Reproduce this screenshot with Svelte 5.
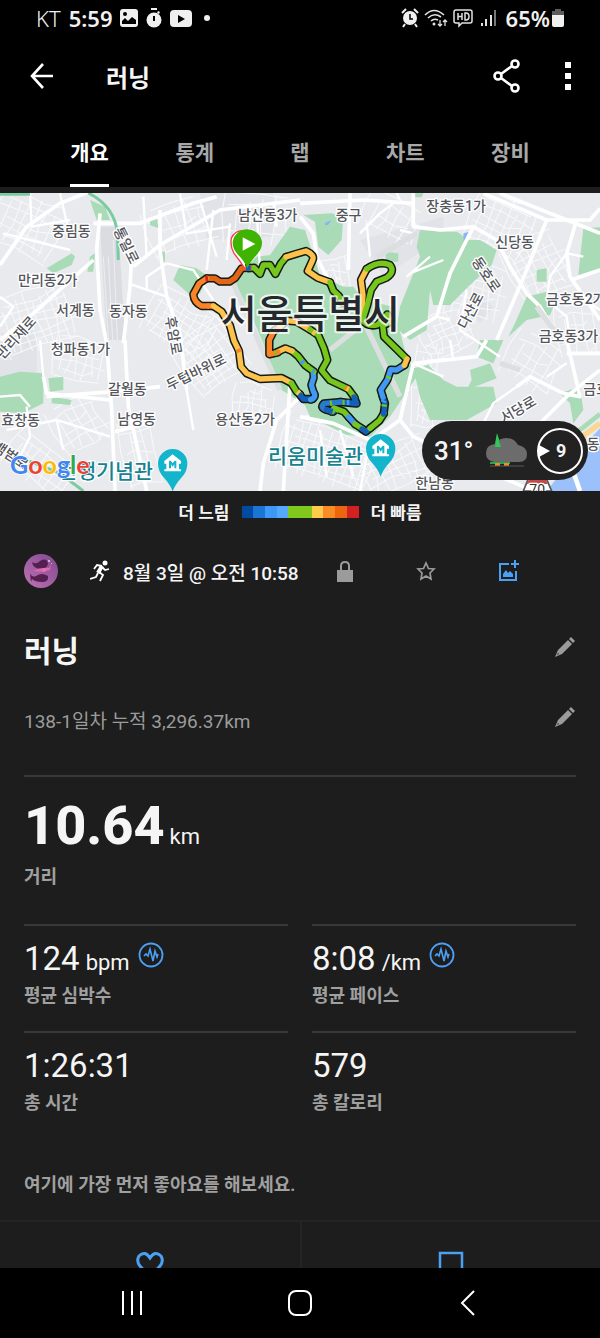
<script lang="ts">
  interface Segment {
    color: string;
    d: string;
  }

  const tabs = ["개요", "통계", "랩", "차트", "장비"];
  let activeTab = $state(0);

  const paceColors = ["#004a9f", "#1976d2", "#3f97f6", "#56a8ff", "#7fca1d", "#7fca1d", "#ffcb4c", "#fa8c28", "#ec650f", "#d32020"];

  const stats = [
    { value: "124", unit: "bpm", label: "평균 심박수", chart: true },
    { value: "8:08", unit: "/km", label: "평균 페이스", chart: true },
    { value: "1:26:31", unit: "", label: "총 시간", chart: false },
    { value: "579", unit: "", label: "총 칼로리", chart: false }
  ];

  const green = "#76c71c";
  const yellow = "#fdc24b";
  const orange = "#f98326";
  const blue = "#4299f3";
  const navy = "#145fb8";

  const route: Segment[] = [
    { color: yellow, d: "M545 270L549 210L543 165L560 132" },
    { color: green, d: "M560 132Q598 105 630 120Q646 140 620 158L590 170L573 195L562 240L548 285Q560 306 592 300L622 268L634 290L608 302L612 335L650 372L680 402" },
    { color: green, d: "M205 130L222 128L240 147L250 120L270 120L286 147L302 116L318 96" },
    { color: yellow, d: "M318 96L350 86L378 78Q405 90 398 105L383 138L412 158L450 172" },
    { color: green, d: "M450 172L460 197L476 212L490 235" },
    { color: "#e36617", d: "M208 128L185 130L166 158L148 170L120 170L104 160L80 160" },
    { color: orange, d: "M80 160L58 175L40 208Q42 232 65 243L100 243" },
    { color: yellow, d: "M100 243L125 260L150 302L162 347L177 378L183 425L200 445L240 462L305 459L334 474" },
    { color: green, d: "M334 474L350 500L360 508" },
    { color: navy, d: "M360 510L370 522L398 522" },
    { color: blue, d: "M392 524Q412 516 400 500L394 480L401 458L400 440" },
    { color: green, d: "M402 440L376 421L354 393L336 378" },
    { color: yellow, d: "M336 378L316 370L290 382" },
    { color: orange, d: "M294 382L268 388L268 345L282 317L300 305" },
    { color: yellow, d: "M300 305L320 287L350 290L390 314" },
    { color: green, d: "M390 314L415 331L432 370L442 405L425 436L450 466L505 492L524 518" },
    { color: navy, d: "M522 516L530 536L480 531" },
    { color: "#2a7bd0", d: "M484 531L432 535Q418 548 440 555L460 560" },
    { color: green, d: "M455 560L462 549L492 560L508 578" },
    { color: blue, d: "M506 576L526 598" },
    { color: green, d: "M525 597L548 612" },
    { color: navy, d: "M546 612L558 620L572 608" },
    { color: green, d: "M570 610L598 587L612 565" },
    { color: navy, d: "M611 567L615 535L608 515" },
    { color: blue, d: "M609 517L602 495L622 465L632 434L650 435L674 420" },
    { color: yellow, d: "M673 421L681 402" }
  ];

  // short colour changes along the track
  const ticks: Segment[] = [
    { color: "#d32020", d: "M76 161L84 160" },
    { color: orange, d: "M174 372L178 382M82 243L87 243M496 488L502 491" },
    { color: navy, d: "M198 129L212 129M432 552L458 560M524 524L529 534" },
    { color: green, d: "M284 385L290 383M380 424L386 427M612 545L613 538M450 535L456 534M488 532L494 532M470 554L476 556M624 460L627 454" },
    { color: blue, d: "M364 408L370 415M396 438L402 442M500 532L508 532M610 532L612 526" },
    { color: yellow, d: "M352 500L358 505M398 320L406 326M632 278L634 284M500 490L506 493" }
  ];

  const parks = [
    "M910 75L995 70L1030 80L1025 150L985 195L955 170L945 95Z",
    "M870 110L915 120L960 255L1030 290L1060 290L1090 330L1180 350L1220 500L1250 560L1170 680L1110 740L1040 735L930 680L915 645L830 590L790 460L740 345L700 270L770 200L810 195Z",
    "M540 225L590 235L625 260L600 310L570 315L520 270Z",
    "M270 30L315 50L330 90L290 90Z",
    "M450 85L470 75L475 115L450 105Z",
    "M480 185L495 185L495 215L485 220Z",
    "M140 235L215 190L225 200L215 225L160 250Z",
    "M270 200L285 190L280 245L262 245Z",
    "M1260 120L1330 125L1370 125L1400 145L1390 200L1330 290L1290 300L1280 420L1230 450L1190 415L1200 350L1260 200L1250 170Z",
    "M1390 150L1440 150L1490 180L1475 225L1410 285L1350 345L1300 345L1290 300L1350 270Z",
    "M1580 320L1640 305L1660 350L1650 375L1580 390L1525 440L1545 400Z",
    "M1610 240L1640 235L1640 275L1610 275Z",
    "M1750 115L1800 112L1800 235L1735 255Z",
    "M0 560L60 545L130 550L130 640L70 670L0 665Z",
    "M145 565L190 560L190 600L150 605Z",
    "M155 620L215 630L210 645L155 640Z",
    "M1240 535L1285 525L1330 570L1370 590L1480 590L1490 640L1400 690L1290 690L1260 620Z",
    "M1410 540L1470 520L1490 565L1400 600L1415 570Z",
    "M1680 610L1740 590L1750 660L1720 700L1710 640Z",
    "M1155 185L1195 190L1195 215L1160 215Z",
    "M1240 10L1270 10L1265 22L1240 22Z",
    "M1440 450L1510 450L1480 520L1430 500Z"
  ];

  const majorRoads = [
    "M0 225L80 110L180 40L280 0",
    "M300 70L290 180L300 360L320 460L335 660L345 903",
    "M375 450L385 650L440 903",
    "M395 200L390 290L370 460",
    "M400 230L480 165L660 60L900 30",
    "M280 100L420 100L580 40L650 20",
    "M480 60L480 180L500 320L540 430L560 600",
    "M130 560L140 610L330 630",
    "M140 620L340 605L480 590",
    "M345 725L440 700",
    "M0 450L100 370L280 210",
    "M900 80L940 130L950 200L980 260L1010 330",
    "M1050 10L1045 240",
    "M900 40L1090 30L1240 40",
    "M1240 10L1240 110L1320 120L1420 110L1490 150L1530 230L1580 310L1620 350L1680 450",
    "M1420 110L1350 250L1310 380L1210 440",
    "M1450 10L1640 90L1680 90L1770 90L1800 55",
    "M1500 10L1800 130",
    "M1640 90L1580 240L1490 450",
    "M1730 90L1700 190L1710 260L1800 390",
    "M1715 270L1800 240",
    "M1240 520L1430 500L1460 450",
    "M1240 520L1200 690L1130 740",
    "M1200 690L1240 740L1500 860L1600 903",
    "M1700 450L1740 620L1690 610L1590 560L1550 590",
    "M1700 490L1800 490",
    "M1600 720L1700 620L1800 540",
    "M900 620L830 690L790 820L780 903",
    "M870 580L850 903",
    "M900 680L1000 700L1110 750L1180 780"
  ];

  const minorRoads = [
    "M10 130L210 180M90 10L95 110L210 90M180 10L210 140M0 320L40 350L0 410",
    "M430 20L440 200M540 10L560 130L690 110M600 30L650 200M640 60L620 240M500 220L580 240L640 330",
    "M770 60L780 240M820 40L830 110M700 130L760 120M690 100L680 210",
    "M500 220L440 260L440 300L500 320M385 280L500 320M80 650L90 740L60 800",
    "M120 450L130 560M0 620L60 615L90 650M20 720L170 690L330 740M170 690L190 780",
    "M560 600L580 720M1100 100L1110 200M1180 40L1140 70L1080 130M1200 120L1240 130M1190 10L1200 30",
    "M1290 200L1220 260M1330 210L1230 250M1310 380L1350 390M1400 300L1380 420L1500 500",
    "M1750 200L1700 190M1700 190L1650 260L1640 330L1700 380L1710 450M1800 360L1720 310",
    "M1550 590L1480 640L1450 700M1700 520L1640 560M1240 520L1330 560M1350 450L1360 510",
    "M960 720L980 860M1020 720L1060 860M1110 750L1080 903M1330 700L1340 760"
  ];

  interface District {
    x: number;
    y: number;
    w: number;
    h: number;
    angle: number;
    step: number;
  }

  const districts: District[] = [
    { x: 90, y: 110, w: 220, h: 170, angle: 24, step: 28 },
    { x: 110, y: 390, w: 230, h: 180, angle: -18, step: 24 },
    { x: 240, y: 510, w: 160, h: 120, angle: 12, step: 24 },
    { x: 240, y: 700, w: 160, h: 150, angle: -30, step: 28 },
    { x: 120, y: 830, w: 220, h: 120, angle: 38, step: 26 },
    { x: 420, y: 790, w: 100, h: 200, angle: -12, step: 32 },
    { x: 540, y: 400, w: 210, h: 150, angle: 30, step: 23 },
    { x: 630, y: 500, w: 180, h: 180, angle: -35, step: 22 },
    { x: 760, y: 640, w: 120, h: 110, angle: 8, step: 20 },
    { x: 540, y: 110, w: 200, h: 150, angle: -20, step: 34 },
    { x: 780, y: 90, w: 220, h: 150, angle: 5, step: 38 },
    { x: 1010, y: 270, w: 90, h: 130, angle: -10, step: 20 },
    { x: 1180, y: 90, w: 190, h: 120, angle: 28, step: 34 },
    { x: 1500, y: 110, w: 190, h: 180, angle: 24, step: 26 },
    { x: 1620, y: 230, w: 180, h: 190, angle: -28, step: 26 },
    { x: 1430, y: 310, w: 180, h: 180, angle: 12, step: 26 },
    { x: 1340, y: 430, w: 150, h: 120, angle: -24, step: 24 },
    { x: 1280, y: 590, w: 80, h: 250, angle: 6, step: 22 },
    { x: 980, y: 790, w: 280, h: 180, angle: 18, step: 23 },
    { x: 1180, y: 830, w: 230, h: 130, angle: -24, step: 25 },
    { x: 1600, y: 520, w: 170, h: 150, angle: 30, step: 32 },
    { x: 1740, y: 420, w: 140, h: 150, angle: -8, step: 28 }
  ];

  // crooked little street grid for one district
  function streets(area: District): string {
    let d = "";
    let n = 0;
    for (let x = -area.w / 2; x <= area.w / 2; x += area.step) {
      const bend = ((n * 7) % 5) * 3 - 6;
      const cut = ((n * 11) % 4) * 12;
      d += `M${x} ${-area.h / 2 + cut}L${x + bend} ${bend * 2}L${x - bend} ${area.h / 2 - cut / 2}`;
      n++;
    }
    for (let y = -area.h / 2; y <= area.h / 2; y += area.step) {
      const bend = ((n * 5) % 7) * 3 - 9;
      const cut = ((n * 13) % 5) * 11;
      d += `M${-area.w / 2 + cut} ${y}L${bend * 2} ${y + bend}L${area.w / 2 - cut} ${y - bend}`;
      n++;
    }
    return d;
  }

  const places = [
    { name: "중림동", x: 156, y: 138 },
    { name: "만리동2가", x: 54, y: 286 },
    { name: "서계동", x: 168, y: 374 },
    { name: "동자동", x: 327, y: 377 },
    { name: "청파동1가", x: 152, y: 493 },
    { name: "갈월동", x: 324, y: 613 },
    { name: "남영동", x: 352, y: 703 },
    { name: "효창동", x: 4, y: 705 },
    { name: "용산동2가", x: 646, y: 702 },
    { name: "남산동3가", x: 714, y: 91 },
    { name: "중구", x: 1007, y: 91 },
    { name: "장충동1가", x: 1279, y: 62 },
    { name: "신당동", x: 1486, y: 170 },
    { name: "금호동2가", x: 1638, y: 343 },
    { name: "금호동3가", x: 1616, y: 453 },
    { name: "금호동", x: 1750, y: 612 },
    { name: "한남동", x: 1246, y: 893 },
    { name: "동", x: 1760, y: 776 }
  ];

  const roadNames = [
    { name: "통일로", x: 340, y: 120, angle: 64 },
    { name: "후암로", x: 496, y: 382, angle: 80 },
    { name: "두텁바위로", x: 508, y: 602, angle: -26 },
    { name: "만리재로", x: 8, y: 510, angle: -48 },
    { name: "다산로", x: 1398, y: 420, angle: -62 },
    { name: "동호로", x: 1414, y: 214, angle: 56 },
    { name: "서당로", x: 1512, y: 700, angle: -30 },
    { name: "백범로", x: -24, y: 776, angle: 34 }
  ];
</script>

{#snippet pencil()}
  <svg width="22" height="22" viewBox="0 0 22 22" fill="#9b9b9b">
    <path d="M17 1L21 5L19 7L15 3ZM14 4L18 8L8 18L1 21L4 14ZM4 17L3 19L5 18Z" fill-rule="evenodd" />
  </svg>
{/snippet}

<div class="app">
  <header>
    <div class="status-bar">
      <span class="carrier">KT</span>
      <span class="clock">5:59</span>
      <svg width="18" height="18" viewBox="0 0 18 18">
        <rect width="18" height="18" rx="3" fill="#f0f0f0" />
        <circle cx="5" cy="5" r="2" fill="#000" />
        <path d="M2 15V12L5 9L8 12L12 8L16 11V15Z" fill="#000" />
      </svg>
      <svg width="16" height="20" viewBox="0 0 16 20">
        <path d="M5 0h6v2H5ZM12 3l2 1-1 2-2-1Z" fill="#f0f0f0" />
        <circle cx="8" cy="12" r="7.500" fill="#f0f0f0" />
        <path d="M8 8V13" stroke="#000" stroke-width="2" />
      </svg>
      <svg width="22" height="18" viewBox="0 0 22 18">
        <rect y="1" width="22" height="17" rx="4" fill="#f0f0f0" />
        <path d="M8 6L15 10L8 14Z" fill="#000" />
      </svg>
      <span class="more-dot"></span>
      <span class="spacer"></span>
      <div class="indicators">
        <svg width="18" height="20" viewBox="0 0 18 20" fill="none" stroke="#f0f0f0">
          <circle cx="9" cy="10" r="7" fill="#f0f0f0" stroke="none" />
          <path d="M1 5L5 1M17 5L13 1M4 16L2 19M14 16L16 19" stroke-width="2" />
          <path d="M9 6V11H12" stroke="#000" stroke-width="1.500" />
        </svg>
        <svg width="24" height="20" viewBox="0 0 24 20" fill="none" stroke="#e2e2e2" stroke-width="1.600">
          <path d="M1 7Q10 -2 20 7M4 10Q10 4 17 9M7 13Q10 10 14 12" />
          <circle cx="10" cy="16" r="1.500" fill="#e2e2e2" stroke="none" />
          <path d="M16 12V18M14 16L16 18L18 16M21 18V12M19 14L21 12L23 14" stroke-width="1.300" />
        </svg>
        <svg width="20" height="20" viewBox="0 0 20 20" fill="none" stroke="#e2e2e2" stroke-width="1.500">
          <path d="M3 2H17Q19 2 19 4V13Q19 15 17 15H9L6 18V15H3Q1 15 1 13V4Q1 2 3 2Z" />
          <path d="M5 5V12M9 5V12M5 8.500H9M12 5V12H13Q16 12 16 8.500Q16 5 13 5Z" />
        </svg>
      </div>
      <svg width="17" height="18" viewBox="0 0 17 18" stroke="#e2e2e2" stroke-width="2">
        <path d="M1 14V17M5 10V17M10 6V17" />
        <path d="M14 1V17" stroke="#777" />
      </svg>
      <span class="battery-level">65%</span>
      <svg class="battery" width="12" height="18" viewBox="0 0 12 18">
        <path d="M3 0h6v2h3v5H0V2h3Z" fill="#5c5c5c" />
        <path d="M0 6h12v10q0 2-2 2H2q-2 0-2-2Z" fill="#f0f0f0" />
      </svg>
    </div>

    <div class="app-bar">
      <button aria-label="뒤로">
        <svg width="24" height="26" viewBox="0 0 24 26" fill="none" stroke="#fff" stroke-width="2.600">
          <path d="M23 13H2M13 1L2 13L13 25" />
        </svg>
      </button>
      <h1>러닝</h1>
      <button class="share" aria-label="공유">
        <svg width="28" height="34" viewBox="0 0 28 34" fill="none" stroke="#fff" stroke-width="2.600">
          <circle cx="5" cy="17" r="3.500" />
          <circle cx="22" cy="5" r="3.500" />
          <circle cx="22" cy="29" r="3.500" />
          <path d="M8 15L19 7M8 19L19 27" />
        </svg>
      </button>
      <button aria-label="더보기">
        <svg width="8" height="30" viewBox="0 0 8 30" fill="#fff">
          <path d="M1 1h6v6H1ZM1 12h6v6H1ZM1 23h6v6H1Z" />
        </svg>
      </button>
    </div>

    <nav class="tabs">
      {#each tabs as tab, i}
        <button class:active={i === activeTab} onclick={() => (activeTab = i)}><span>{tab}</span></button>
      {/each}
    </nav>
  </header>

  <main>
    <div class="map">
      <svg class="map-canvas" viewBox="0 9 1800 894">
        <rect y="9" width="1800" height="894" fill="#e8eaed" />
        <path d="M300 110L355 110L375 450L320 450Z" fill="#dadce1" />
        <path d="M310 200L325 450M325 200L338 450M340 150L352 450" stroke="#eceef1" stroke-width="3" />
        <path d="M0 430L110 420L110 560L0 560ZM600 10L820 10L820 140L620 150ZM1080 150L1330 80L1330 140L1150 260ZM1390 330L1440 310L1480 350L1440 400Z" fill="#e1e3e8" />

        <g class="streets">
          {#each districts as area}
            <path d={streets(area)} transform="translate({area.x} {area.y}) rotate({area.angle})" />
          {/each}
        </g>

        {#each parks as d}
          <path {d} fill="#a9dbb7" />
        {/each}
        <path d="M1390 130L1410 125L1400 150L1392 165ZM975 98L995 90L985 104L975 106Z" fill="#8ab4f8" />
        <path d="M1800 715L1730 790L1640 903H1800Z" fill="#9cc0f9" />
        <path d="M1800 700L1740 745L1690 800" stroke="#fcd592" stroke-width="16" fill="none" />
        <path d="M1800 672L1750 712L1700 745" stroke="#a9dbb7" stroke-width="14" fill="none" />
        <path d="M1690 760L1740 903" stroke="#fff" stroke-width="14" />

        <g class="minor">
          {#each minorRoads as d}
            <path {d} />
          {/each}
        </g>
        <g class="major">
          {#each majorRoads as d}
            <path {d} />
          {/each}
        </g>
        <path d="M0 13L90 13M265 9Q345 50 352 130L355 210M30 790L180 850L250 903" stroke="#7bcba0" stroke-width="9" fill="none" />
        <path d="M700 280L840 600M1060 330L1200 620M990 480L1090 400M1130 200L1250 130M1500 520L1560 540M1610 350L1690 460" stroke="#dcdfdf" stroke-width="16" fill="none" />

        <g transform="translate(540 105)" fill="none" stroke-linejoin="round">
          {#each route as seg}
            <path d={seg.d} stroke="#151a10" stroke-width="25" stroke-linecap="round" />
          {/each}
          {#each route as seg}
            <path d={seg.d} stroke={seg.color} stroke-width="16" stroke-linecap="round" />
          {/each}
          {#each ticks as tick}
            <path d={tick.d} stroke={tick.color} stroke-width="16" />
          {/each}
        </g>

        <g class="place">
          {#each places as place}
            <text x={place.x} y={place.y}>{place.name}</text>
          {/each}
          {#each roadNames as road}
            <text transform="translate({road.x} {road.y}) rotate({road.angle})">{road.name}</text>
          {/each}
        </g>
        <text class="city" x="662" y="414">서울특별시</text>
        <text class="museum" x="174" y="866">전쟁기념관</text>
        <text class="museum" x="804" y="822">리움미술관</text>

        {#each [[518, 821], [1142, 776]] as [x, y]}
          <g transform="translate({x} {y})">
            <path d="M0 84Q-6 64 -28 40Q-44 22 -44 0A44 44 0 0 1 44 0Q44 22 28 40Q6 64 0 84Z" fill="#12b5cb" />
            <path d="M-25 -8L0 -28L25 -8V0H19V17H25V23H-25V17H-19V0H-25ZM-11 14H-5V2L0 9L5 2V14H11V-9H6L0 -1L-6 -9H-11Z" fill="#fff" fill-rule="evenodd" />
          </g>
        {/each}

        <path d="M736 238Q722 215 702 190Q690 170 694 145Q704 122 728 122" stroke="#f33b55" stroke-width="4" fill="#fff" />
        <path d="M742 235Q735 215 712 192Q698 176 698 160A44 42 0 0 1 786 160Q786 176 772 192Q750 215 742 235Z" fill="#3fb400" />
        <path d="M728 142L766 162L728 182Z" fill="#fff" />

        <path d="M1584 868H1640L1655 903H1570Z" fill="#fff" stroke="#555" stroke-width="5" />
        <path d="M1586 870H1638L1643 882H1580Z" fill="#c54848" />
        <text x="1588" y="916" class="shield">70</text>
        <text class="google" x="30" y="853"><tspan fill="#4285f4">G</tspan><tspan fill="#ea4335">o</tspan><tspan fill="#fbbc05">o</tspan><tspan fill="#4285f4">g</tspan><tspan fill="#34a853">l</tspan><tspan fill="#ea4335">e</tspan></text>
      </svg>

      <div class="weather">
        <span class="temperature">31°</span>
        <svg width="42" height="36" viewBox="0 0 42 36">
          <path d="M11 0L16 16H8Z" fill="#2fc65a" />
          <path d="M8 29Q0 28 0 20Q0 12 9 11Q13 5 20 5Q28 5 32 12Q41 14 41 21Q41 29 33 29Z" fill="#6c6c6c" />
          <path d="M11 2L15 14H9Z" fill="#2fc65a" />
          <path d="M4 29H24V31H4Z" fill="#20a851" />
          <path d="M9 30H14V33H9ZM18 30H23V33H18Z" fill="#f18b2c" />
          <path d="M4 33H38" stroke="#585858" />
        </svg>
        <div class="wind">
          <svg width="11" height="12" viewBox="0 0 11 12"><path d="M0 0L11 6L0 12Z" fill="#fff" /></svg>
          <span>9</span>
        </div>
      </div>
    </div>

    <div class="legend">
      <span>더 느림</span>
      <div class="scale">
        {#each paceColors as color}
          <i style="background: {color}"></i>
        {/each}
      </div>
      <span>더 빠름</span>
    </div>

    <div class="content">
      <section class="meta">
        <svg width="35" height="35" viewBox="0 0 35 35">
          <defs>
            <linearGradient id="avatar-bg" x1="1" y1="0" x2="0" y2="1">
              <stop offset="0" stop-color="#82488f" />
              <stop offset="1" stop-color="#bd73b4" />
            </linearGradient>
          </defs>
          <circle cx="17" cy="17" r="17" fill="url(#avatar-bg)" />
          <path d="M8 8Q12 11 16 7Q23 3 24 10Q22 16 17 15Q9 15 8 8ZM6 19Q8 24 12 22Q18 18 24 22Q25 28 18 28Q11 28 8 25L7 28Z" fill="#542052" />
          <path d="M9 17Q17 13 25 14L27 10L26 16Q18 19 9 17Z" fill="#df68ac" />
          <circle cx="20" cy="16" r="2" fill="#df76b2" />
          <path d="M24 6h2v2h-2ZM27 9h1v1h-1Z" fill="#ceb5d9" />
        </svg>
        <svg class="runner" width="20" height="22" viewBox="0 0 20 22" fill="none" stroke="#fff">
          <circle cx="15" cy="3" r="2.500" fill="#fff" stroke="none" />
          <path d="M12 6L8 13" stroke-width="4" />
          <path d="M12 6L7 5L4 9M12 7L15 10L19 9M9 12L13 15L10 21M8 13L6 17L0 19" stroke-width="1.800" />
        </svg>
        <time>8월 3일 @ 오전 10:58</time>
        <div class="meta-actions">
          <button aria-label="개인 정보">
            <svg width="18" height="22" viewBox="0 0 18 22">
              <path d="M1 10H17V22H1Z" fill="#9b9b9b" />
              <path d="M5 10V6Q5 2 9 2Q13 2 13 6V10" fill="none" stroke="#9b9b9b" stroke-width="2" />
            </svg>
          </button>
          <button aria-label="즐겨찾기">
            <svg width="20" height="20" viewBox="0 0 20 20" fill="none" stroke="#9b9b9b" stroke-width="1.700">
              <path d="M10 2L12.500 7.500L18 8L14 12L15 18L10 15L5 18L6 12L2 8L7.500 7.500Z" />
            </svg>
          </button>
          <button aria-label="사진 추가">
            <svg width="22" height="22" viewBox="0 0 22 22" fill="none" stroke="#4ca0f4" stroke-width="2">
              <path d="M11 4H2V20H18V11M17 0V8M13 4H21" />
              <path d="M5 17V14L8 10L10 13L12 11L15 14V17Z" fill="#4ca0f4" stroke="none" />
            </svg>
          </button>
        </div>
      </section>

      <section class="editable name">
        <h2>러닝</h2>
        <button aria-label="이름 편집">{@render pencil()}</button>
      </section>
      <section class="editable note">
        <p>138-1일차 누적 3,296.37km</p>
        <button aria-label="메모 편집">{@render pencil()}</button>
      </section>

      <section class="distance">
        <div class="value"><strong>10.64</strong><span>km</span></div>
        <div class="label">거리</div>
      </section>

      <section class="stats">
        {#each stats as stat}
          <div class="stat">
            <div class="value">
              <strong>{stat.value}</strong>
              {#if stat.unit}<span>{stat.unit}</span>{/if}
              {#if stat.chart}
                <button aria-label="{stat.label} 차트">
                  <svg width="26" height="26" viewBox="0 0 26 26" fill="none" stroke="#4ca0f4">
                    <circle cx="13" cy="13" r="11.500" stroke-width="1.800" />
                    <path d="M6 14L8 12L10 14L12 7L15 19L17 9L19 15L20 12" stroke-width="1.600" />
                  </svg>
                </button>
              {/if}
            </div>
            <div class="label">{stat.label}</div>
          </div>
        {/each}
      </section>

      <p class="likes">여기에 가장 먼저 좋아요를 해보세요.</p>
    </div>

    <div class="actions">
      <button aria-label="좋아요">
        <svg width="28" height="28" viewBox="0 0 28 28" fill="none" stroke="#4ca0f4" stroke-width="3">
          <path d="M14 26L4 15Q0 10 3 5Q9 -1 14 7Q19 -1 25 5Q28 10 24 15Z" />
        </svg>
      </button>
      <button aria-label="댓글">
        <svg width="26" height="28" viewBox="0 0 26 28" fill="none" stroke="#4ca0f4" stroke-width="2.500">
          <path d="M2 2H24V26L17 19H2Z" />
        </svg>
      </button>
    </div>
  </main>

  <footer>
    <button aria-label="최근 앱">
      <svg width="24" height="26" viewBox="0 0 24 26" stroke="#fff" stroke-width="2"><path d="M3 1V25M12 1V25M21 1V25" /></svg>
    </button>
    <button aria-label="홈">
      <svg width="24" height="26" viewBox="0 0 24 26"><rect x="1" y="1" width="22" height="24" rx="7" fill="none" stroke="#fff" stroke-width="2" /></svg>
    </button>
    <button aria-label="이전">
      <svg width="24" height="26" viewBox="0 0 24 26" fill="none" stroke="#fff" stroke-width="2"><path d="M18 1L6 13L18 25" /></svg>
    </button>
  </footer>
</div>

<style>
  :global(body) {
    background: #1d1d1d;
  }
  .app {
    height: 100vh;
    display: flex;
    flex-direction: column;
    background: #1d1d1d;
    color: #f5f5f5;
    font-family: Roboto, "Noto Sans CJK KR", sans-serif;
  }
  .app svg {
    display: block;
    flex: none;
  }
  button {
    padding: 0;
    border: none;
    background: none;
    color: inherit;
    font: inherit;
    cursor: pointer;
  }
  h1, h2, p {
    margin: 0;
  }
  header {
    background: #000;
    flex: none;
  }
  .status-bar {
    height: 36px;
    padding: 0 36px;
    display: flex;
    align-items: center;
    gap: 8px;
    font-family: "Noto Sans", sans-serif;
    font-size: 22px;
    color: #f0f0f0;
  }
  .carrier {
    font-weight: 300;
  }
  .clock, .battery-level {
    font-weight: 600;
  }
  .more-dot {
    width: 6px;
    height: 6px;
    margin-left: 4px;
    border-radius: 50%;
    background: #f0f0f0;
  }
  .spacer {
    flex: 1;
  }
  .indicators {
    display: flex;
    align-items: center;
    gap: 5px;
  }
  .battery {
    margin-left: -6px;
  }
  .app-bar {
    height: 80px;
    padding: 0 28px 0 30px;
    display: flex;
    align-items: center;
  }
  .app-bar h1 {
    flex: 1;
    margin-left: 52px;
    font-size: 24px;
    font-weight: 700;
  }
  .share {
    margin-right: 43px;
  }
  .tabs {
    height: 71px;
    padding: 0 37px;
    display: flex;
  }
  .tabs button {
    flex: 1;
    display: flex;
    justify-content: center;
    color: #a8a8a8;
    font-size: 21px;
    font-weight: 700;
    line-height: 62px;
  }
  .tabs span {
    padding-top: 6px;
    border-bottom: 3px solid transparent;
  }
  .tabs .active {
    color: #fff;
  }
  .tabs .active span {
    border-color: #fff;
  }

  main {
    flex: 1;
    min-height: 0;
    padding-top: 6px;
    overflow-y: auto;
    scrollbar-width: none;
  }
  .map {
    position: relative;
  }
  .map-canvas {
    width: 100%;
  }
  .streets {
    fill: none;
    stroke: #f8f9fb;
    stroke-width: 3;
  }
  .minor {
    fill: none;
    stroke: #fff;
    stroke-width: 7;
  }
  .major {
    fill: none;
    stroke: #fff;
    stroke-width: 11;
    stroke-linejoin: round;
  }
  .map text {
    font-family: Roboto, "Noto Sans CJK KR", sans-serif;
    paint-order: stroke;
    stroke: #fff;
    stroke-width: 8px;
    stroke-linejoin: round;
  }
  .place text {
    font-size: 42px;
    font-weight: 500;
    fill: #54565c;
  }
  .map .city {
    font-size: 117px;
    font-weight: 500;
    fill: #25282d;
    stroke-width: 12px;
    stroke-opacity: 0.75;
  }
  .map .museum {
    font-size: 62px;
    font-weight: 500;
    fill: #178391;
  }
  .map .shield {
    font-size: 42px;
    fill: #333;
  }
  .map .google {
    font-family: Lato, sans-serif;
    font-size: 75px;
    font-weight: 700;
    stroke-width: 4px;
  }
  .weather {
    position: absolute;
    right: 12px;
    bottom: 11px;
    height: 59px;
    padding: 0 5px 0 12px;
    display: flex;
    align-items: center;
    gap: 9px;
    border-radius: 30px;
    background: #222;
  }
  .temperature {
    width: 42px;
    margin-right: 1px;
    font-size: 26px;
    font-weight: 500;
  }
  .wind {
    width: 42px;
    height: 42px;
    display: flex;
    align-items: center;
    gap: 6px;
    border: 2px solid #fff;
    border-radius: 50%;
    font-size: 18px;
    font-weight: 700;
  }

  .legend {
    height: 41px;
    display: flex;
    align-items: center;
    justify-content: center;
    gap: 12px;
    font-size: 17px;
    font-weight: 700;
  }
  .scale {
    width: 117px;
    height: 12px;
    display: flex;
  }
  .scale i {
    flex: 1;
  }

  .content {
    padding: 0 24px;
  }
  .meta {
    height: 78px;
    display: flex;
    align-items: center;
  }
  .runner {
    margin: 0 13px 0 31px;
  }
  .meta time {
    font-size: 19px;
    font-weight: 500;
    white-space: nowrap;
  }
  .meta-actions {
    margin-left: 37px;
    display: flex;
    align-items: center;
    gap: 62px;
  }
  .editable {
    display: flex;
    align-items: center;
    justify-content: space-between;
  }
  .editable button {
    margin-bottom: 5px;
  }
  .name {
    height: 78px;
  }
  .name h2 {
    font-size: 30px;
    font-weight: 700;
  }
  .note {
    height: 62px;
    padding-bottom: 25px;
    border-bottom: 2px solid #383838;
    color: #9b9b9b;
    font-size: 19px;
  }
  .value {
    display: flex;
    align-items: baseline;
    gap: 6px;
  }
  .value span {
    font-size: 22px;
    font-weight: 500;
  }
  .label {
    height: 24px;
    color: #a0a0a0;
    font-size: 18px;
    font-weight: 600;
    line-height: 24px;
  }
  .distance {
    padding: 17px 0 35px;
  }
  .distance .value {
    height: 64px;
    margin-bottom: 7px;
    gap: 5px;
    line-height: 64px;
  }
  .distance strong {
    font-size: 54px;
    font-weight: 800;
  }
  .stats {
    display: grid;
    grid-template-columns: 1fr 1fr;
    column-gap: 24px;
  }
  .stat {
    padding: 13px 0 23px;
    border-top: 2px solid #383838;
  }
  .stat .value {
    height: 40px;
    margin-bottom: 5px;
    line-height: 40px;
  }
  .stat strong {
    font-size: 33px;
    font-weight: 400;
  }
  .value span {
    font-weight: 400;
  }
  .stat button {
    align-self: flex-start;
    margin-top: 3px;
    margin-left: 2px;
  }
  .likes {
    margin: 35px 0 23px;
    color: #a0a0a0;
    font-size: 18px;
    font-weight: 600;
    line-height: 24px;
  }
  .actions {
    display: grid;
    grid-template-columns: 1fr 1fr;
    border-top: 2px solid #242424;
  }
  .actions button {
    height: 86px;
    display: flex;
    align-items: center;
    justify-content: center;
  }
  .actions button + button {
    border-left: 2px solid #242424;
  }

  footer {
    flex: none;
    height: 70px;
    padding: 0 48px;
    display: flex;
    background: #000;
  }
  footer button {
    flex: 1;
    display: flex;
    align-items: center;
    justify-content: center;
  }
</style>
